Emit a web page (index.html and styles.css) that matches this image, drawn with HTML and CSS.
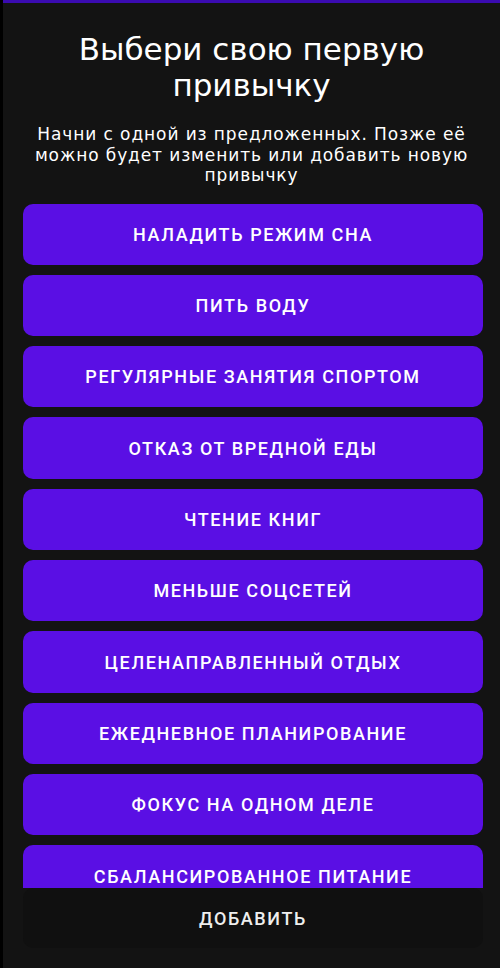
FILE: index.html
```html
<!DOCTYPE html>
<html lang="ru">
<head>
<meta charset="utf-8">
<link rel="stylesheet" href="styles.css">
</head>
<body>
<div class="app">
  <div class="topbar"></div>
  <header class="header">
    <h1 class="title">Выбери свою первую привычку</h1>
    <p class="subtitle">Начни с одной из предложенных. Позже её можно будет изменить или добавить новую привычку</p>
  </header>
  <div class="list">
    <button class="habit">Наладить режим сна</button>
    <button class="habit">Пить воду</button>
    <button class="habit">Регулярные занятия спортом</button>
    <button class="habit">Отказ от вредной еды</button>
    <button class="habit">Чтение книг</button>
    <button class="habit">Меньше соцсетей</button>
    <button class="habit">Целенаправленный отдых</button>
    <button class="habit">Ежедневное планирование</button>
    <button class="habit">Фокус на одном деле</button>
    <button class="habit">Сбалансированное питание</button>
  </div>
  <footer class="footer">
    <button class="add">Добавить</button>
  </footer>
</div>
</body>
</html>
```
FILE: styles.css
```css
html, body {
  margin: 0;
  padding: 0;
  background: #000;
  height: 968px;
  overflow: hidden;
}
.app {
  margin-left: 3px;
  height: 968px;
  background: #131313;
  display: flex;
  flex-direction: column;
  color: #fff;
}
.topbar {
  height: 3px;
  background: #3a0bb0;
  flex: none;
}
.header {
  flex: none;
  padding: 28px 20px 0 20px;
  text-align: center;
}
.title {
  margin: 0;
  font-family: "DejaVu Sans", sans-serif;
  font-weight: normal;
  font-size: 31px;
  line-height: 36px;
  padding: 0 40px;
}
.subtitle {
  margin: 21px auto 0 auto;
  width: 452px;
  font-family: "DejaVu Sans", sans-serif;
  font-size: 17px;
  letter-spacing: 0.9px;
  line-height: 20.5px;
}
.list {
  flex: 1;
  min-height: 0;
  overflow: hidden;
  padding: 18px 17px 0 20px;
  display: flex;
  flex-direction: column;
  gap: 10px;
}
.habit, .add {
  flex: none;
  height: 61.33px;
  border: none;
  border-radius: 10px;
  background: #5a0fe4;
  color: #fff;
  font-family: Roboto, "Liberation Sans", sans-serif;
  font-weight: 500;
  font-size: 18px;
  letter-spacing: 1.6px;
  text-transform: uppercase;
  padding: 0;
}
.footer {
  flex: none;
  padding: 0 17px 20px 20px;
  display: flex;
}
.add {
  flex: 1;
  height: 60px;
  background: #101010;
  color: #eee;
}
```
